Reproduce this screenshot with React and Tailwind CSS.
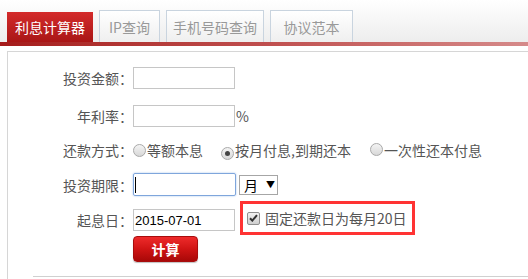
import React from "react";

const font = { fontFamily: '"Noto Sans CJK SC", "Noto Sans", sans-serif' };

function Radio({ checked }) {
  return (
    <span className="inline-flex w-[13px] h-[13px] rounded-full border border-[#a9a9a9] bg-gradient-to-b from-[#f4f4f4] to-[#d8d8d8] items-center justify-center shrink-0">
      {checked ? <span className="w-[5px] h-[5px] rounded-full bg-[#444]" /> : null}
    </span>
  );
}

export default function App() {
  return (
    <div className="w-[528px] h-[279px] overflow-hidden bg-white text-[14px] text-[#555]" style={font}>
      {/* tab strip */}
      <div className="h-[42px] flex items-end pl-[7px] bg-gradient-to-b from-white to-[#ededed]">
        <div className="w-[86px] h-[30px] flex items-center justify-center bg-gradient-to-b from-[#d42b2b] to-[#a91616] text-white leading-none">
          利息计算器
        </div>
        <div className="ml-[6px] w-[61px] h-[32px] flex items-center justify-center border border-b-0 border-[#c9d4df] bg-gradient-to-b from-white to-[#efefef] text-[#999] leading-none">
          IP查询
        </div>
        <div className="ml-[6px] w-[98px] h-[32px] flex items-center justify-center border border-b-0 border-[#c9d4df] bg-gradient-to-b from-white to-[#efefef] text-[#999] leading-none">
          手机号码查询
        </div>
        <div className="ml-[6px] w-[83px] h-[32px] flex items-center justify-center border border-b-0 border-[#c9d4df] bg-gradient-to-b from-white to-[#efefef] text-[#999] leading-none">
          协议范本
        </div>
      </div>
      <div className="h-[4px] bg-gradient-to-r from-[#a51a1a] via-[#bf4e4e] to-[#d58a8a]" />

      {/* panel */}
      <div className="mt-[5px] ml-[7px] border-t border-l border-[#d6d6d6] h-[240px] pt-[15px]">
        {/* row 1 */}
        <div className="flex items-center h-[22px]">
          <div className="w-[125px] text-right leading-none">投资金额：</div>
          <div className="w-[102px] h-[22px] border border-[#c6c6c6]" />
        </div>
        {/* row 2 */}
        <div className="flex items-center h-[22px] mt-[16px]">
          <div className="w-[125px] text-right leading-none">年利率：</div>
          <div className="w-[102px] h-[22px] border border-[#c6c6c6]" />
          <span className="ml-[1px] leading-none">%</span>
        </div>
        {/* row 3 */}
        <div className="flex items-center h-[22px] mt-[12px]">
          <div className="w-[125px] text-right leading-none">还款方式：</div>
          <Radio />
          <span className="ml-[1px] leading-none">等额本息</span>
          <span className="ml-[18px]"><Radio checked /></span>
          <span className="ml-[1px] leading-none">按月付息,到期还本</span>
          <span className="ml-[19px]"><Radio /></span>
          <span className="ml-[1px] leading-none">一次性还本付息</span>
        </div>
        {/* row 4 */}
        <div className="flex items-center h-[23px] mt-[12px]">
          <div className="w-[125px] text-right leading-none">投资期限：</div>
          <div className="w-[103px] h-[23px] border border-[#7fa6dc] rounded-[2px] shadow-[0_0_2px_#9ebde8] flex items-center pl-[1px]">
            <span className="w-[1px] h-[16px] bg-black" />
          </div>
          <div className="ml-[3px] w-[39px] h-[20px] border border-[#a6a6a6] flex items-center pl-[4px] text-black leading-none">
            <span>月</span>
            <span className="ml-[8px] text-[9px]">▼</span>
          </div>
        </div>
        {/* row 5 */}
        <div className="flex items-start mt-[5px]">
          <div className="w-[125px] text-right leading-none mt-[12px]">起息日：</div>
          <div className="mt-[8px] w-[102px] h-[22px] border border-[#c6c6c6] flex items-center pl-[1px] text-black text-[13px] leading-none" style={{ fontFamily: '"Liberation Sans", Arial, sans-serif' }}>
            2015-07-01
          </div>
          <div className="ml-[5px] w-[175px] h-[34px] border-[3px] border-[#ff3333] flex items-center pl-[4px]">
            <span className="w-[13px] h-[13px] border border-[#8f8f8f] rounded-[2px] bg-gradient-to-b from-[#f2f2f2] to-[#cfcfcf] flex items-center justify-center">
              <svg width="9" height="8" viewBox="0 0 9 8">
                <path d="M1 4.2 L3.3 6.6 L8 1.2" stroke="#333" strokeWidth="2" fill="none" />
              </svg>
            </span>
            <span className="ml-[5px] leading-none">固定还款日为每月20日</span>
          </div>
        </div>
        {/* button */}
        <div className="ml-[125px] mt-[1px] w-[65px] h-[26px] rounded-[4px] border border-[#a80d0d] bg-gradient-to-b from-[#ee2a2a] via-[#d01414] to-[#a80808] flex items-center justify-center text-white font-bold leading-none shadow-[0_1px_1px_rgba(0,0,0,0.25)]">
          计算
        </div>
        <div className="ml-[25px] mt-[14px] border-t border-[#d0d0d0]" />
      </div>
    </div>
  );
}
